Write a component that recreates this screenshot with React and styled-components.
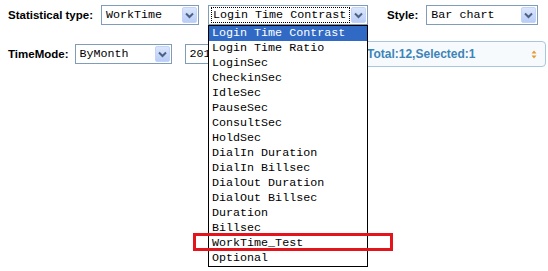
import styled, { createGlobalStyle } from 'styled-components'

const GlobalStyle = createGlobalStyle`
  body {
    margin: 0;
    background: #ffffff;
  }
`

const Page = styled.div`
  position: relative;
  width: 548px;
  height: 271px;
  overflow: hidden;
  background: #ffffff;
`

const Row = styled.div`
  display: flex;
  align-items: center;
  height: 20px;
  padding-left: 8px;
  margin-top: ${(p) => p.top}px;
`

const Label = styled.span`
  font-family: 'Liberation Sans', Arial, sans-serif;
  font-weight: bold;
  font-size: 11.5px;
  color: #000000;
  margin-right: ${(p) => p.gap}px;
  margin-left: ${(p) => p.before || 0}px;
  white-space: nowrap;
`

const SelectBox = styled.div`
  box-sizing: border-box;
  display: flex;
  align-items: center;
  justify-content: space-between;
  width: ${(p) => p.width}px;
  height: 20px;
  margin-right: ${(p) => p.gap || 0}px;
  border: 1px solid #7f9db9;
  background: #ffffff;
  padding: 0 1px 0 2px;
  flex-shrink: 0;
`

const SelectText = styled.span`
  font-family: 'Liberation Mono', 'Courier New', monospace;
  font-size: 11.7px;
  color: #000000;
  line-height: 14px;
  padding: 0 1px;
  white-space: nowrap;
  border: 1px dotted ${(p) => (p.focus ? '#000000' : 'transparent')};
  flex: ${(p) => (p.focus ? 1 : 'none')};
  margin-right: ${(p) => (p.focus ? 1 : 0)}px;
`

const ArrowButton = styled.span`
  box-sizing: border-box;
  width: 15px;
  height: 16px;
  border-radius: 2px;
  border: 1px solid #c3d3fd;
  background: linear-gradient(#dbe6fb, #b9cdf6);
  display: flex;
  align-items: center;
  justify-content: center;
  flex-shrink: 0;
`

const TotalBox = styled.div`
  box-sizing: border-box;
  display: flex;
  align-items: center;
  justify-content: space-between;
  width: 191px;
  height: 26px;
  margin-left: auto;
  margin-right: 2px;
  padding: 0 8px 0 11px;
  border: 1px solid #a9c6dc;
  border-radius: 4px;
  background: #f7fafc;
  font-family: 'Liberation Sans', Arial, sans-serif;
  font-weight: bold;
  font-size: 12px;
  color: #3d84b8;
`

const DropList = styled.ul`
  position: absolute;
  left: 208px;
  top: 25px;
  width: 160px;
  box-sizing: border-box;
  margin: 0;
  padding: 0;
  list-style: none;
  border: 1px solid #000000;
  background: #ffffff;
`

const Option = styled.li`
  height: 15px;
  line-height: 15px;
  padding-left: 3px;
  font-family: 'Liberation Mono', 'Courier New', monospace;
  font-size: 11.7px;
  white-space: nowrap;
  background: ${(p) => (p.active ? '#316ac5' : 'transparent')};
  color: ${(p) => (p.active ? '#ffffff' : '#000000')};
`

const Highlight = styled.div`
  position: absolute;
  left: 193px;
  top: 233px;
  width: 200px;
  height: 18px;
  box-sizing: border-box;
  border: 3px solid #e3141b;
`

function Chevron() {
  return (
    <svg width="9" height="7" viewBox="0 0 9 7">
      <path d="M1 1.5 L4.5 5 L8 1.5" fill="none" stroke="#4d6185" strokeWidth="2" />
    </svg>
  )
}

function SortIcon() {
  return (
    <svg width="6" height="9" viewBox="0 0 6 9">
      <path d="M3 0.5 L5.5 3.5 L0.5 3.5 Z" fill="#e8982f" />
      <path d="M3 8.5 L5.5 5.5 L0.5 5.5 Z" fill="#e8982f" />
    </svg>
  )
}

function Select({ width, gap, text, focus }) {
  return (
    <SelectBox width={width} gap={gap}>
      <SelectText focus={focus}>{text}</SelectText>
      <ArrowButton>
        <Chevron />
      </ArrowButton>
    </SelectBox>
  )
}

const options = [
  'Login Time Contrast',
  'Login Time Ratio',
  'LoginSec',
  'CheckinSec',
  'IdleSec',
  'PauseSec',
  'ConsultSec',
  'HoldSec',
  'DialIn Duration',
  'DialIn Billsec',
  'DialOut Duration',
  'DialOut Billsec',
  'Duration',
  'Billsec',
  'WorkTime_Test',
  'Optional',
]

export default function App() {
  return (
    <Page>
      <GlobalStyle />
      <Row top={5}>
        <Label gap={8}>Statistical type:</Label>
        <Select width={98} gap={9} text="WorkTime" />
        <Select width={160} text="Login Time Contrast" focus />
        <Label before={19} gap={8}>Style:</Label>
        <Select width={112} text="Bar chart" />
      </Row>
      <Row top={19}>
        <Label gap={6}>TimeMode:</Label>
        <Select width={97} gap={13} text="ByMonth" />
        <Select width={150} text="2014" />
        <TotalBox>
          <span>Total:12,Selected:1</span>
          <SortIcon />
        </TotalBox>
      </Row>
      <DropList>
        {options.map((o, i) => (
          <Option key={o} active={i === 0}>
            {o}
          </Option>
        ))}
      </DropList>
      <Highlight />
    </Page>
  )
}
